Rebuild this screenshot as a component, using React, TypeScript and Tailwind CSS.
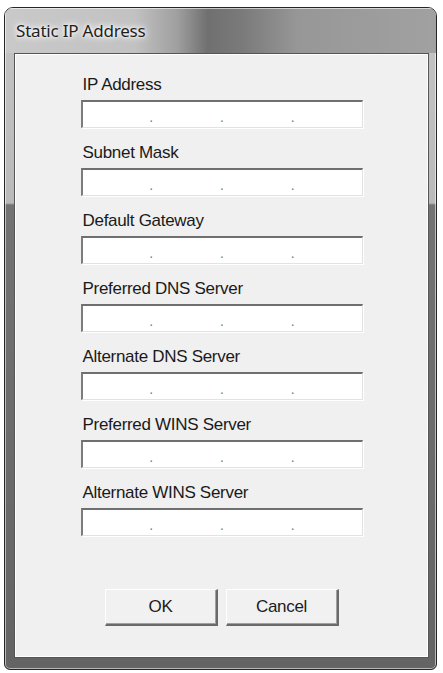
const fields = [
  "IP Address",
  "Subnet Mask",
  "Default Gateway",
  "Preferred DNS Server",
  "Alternate DNS Server",
  "Preferred WINS Server",
  "Alternate WINS Server",
];

// Four-octet address box, shown empty with only the separators
const AddressBox = () => (
  <div className="flex h-[28px] w-[282px] items-end border-t-2 border-l-2 border-r border-b border-t-[#6f6f6f] border-l-[#7c7c7c] border-r-[#e2e2e2] border-b-[#e2e2e2] bg-white pb-[3px] text-[14px] leading-[14px] text-[#7a7a7a] shadow-[1px_1px_0_#ffffff]">
    <div className="flex-1" />
    <span>.</span>
    <div className="flex-1" />
    <span>.</span>
    <div className="flex-1" />
    <span>.</span>
    <div className="flex-1" />
  </div>
);

const DialogButton = ({ label }: { label: string }) => (
  <button className="h-[37px] w-[113px] border-t border-l border-r-2 border-b-2 border-t-white border-l-white border-r-[#6a6a6a] border-b-[#6a6a6a] bg-[#f1f1f1] text-[17px] tracking-[-0.3px] text-[#1c1c1c] shadow-[inset_-1px_-1px_0_#a0a0a0]">
    {label}
  </button>
);

export default function App() {
  return (
    <div className="h-[673px] w-[443px] bg-white pl-[4px] pt-[7px] font-['Liberation_Sans',Arial,sans-serif]">
      <div className="flex h-[663px] w-[433px] flex-col overflow-hidden rounded-t-[9px] rounded-b-[6px] border border-[#262626] bg-[linear-gradient(to_bottom,#c4c4c4_0px,#bababa_195px,#737373_197px,#646464_100%)] shadow-[inset_0_0_0_1px_rgba(255,255,255,0.55)]">
        {/* title bar */}
        <div className="flex h-[45px] shrink-0 items-center bg-[linear-gradient(to_right,#c9c9c9_0%,#c2c2c2_30%,#9f9f9f_40%,#707070_47%,#7a7a7a_55%,#979797_68%,#a1a1a1_100%)] pl-[11px] shadow-[inset_1px_1px_0_rgba(255,255,255,0.6)]">
          <span className="font-['Noto_Sans',sans-serif] text-[17px] tracking-[-0.2px] text-[#1e1e1e] [text-shadow:0_0_10px_#ffffff,0_0_6px_#ffffff,0_0_3px_#ffffff]">
            Static IP Address
          </span>
        </div>

        <div className="flex flex-1 pl-[9px] pr-[7px] pb-[11px]">
          {/* client area */}
          <div className="flex flex-1 flex-col items-center border border-[#555555] bg-[#f0f0f0] pt-[6px] shadow-[inset_1px_1px_0_#ffffff,inset_-1px_-1px_0_#ffffff]">
            {fields.map((name) => (
              <div key={name} className="flex w-[282px] flex-col">
                <div className="mt-[16px] mb-[6px] pl-[2px] text-[17px] leading-[18px] tracking-[-0.3px] text-[#1a1a1a]">
                  {name}
                </div>
                <AddressBox />
              </div>
            ))}

            <div className="mt-[53px] flex gap-[8px]">
              <DialogButton label="OK" />
              <DialogButton label="Cancel" />
            </div>
          </div>
        </div>
      </div>
    </div>
  );
}
